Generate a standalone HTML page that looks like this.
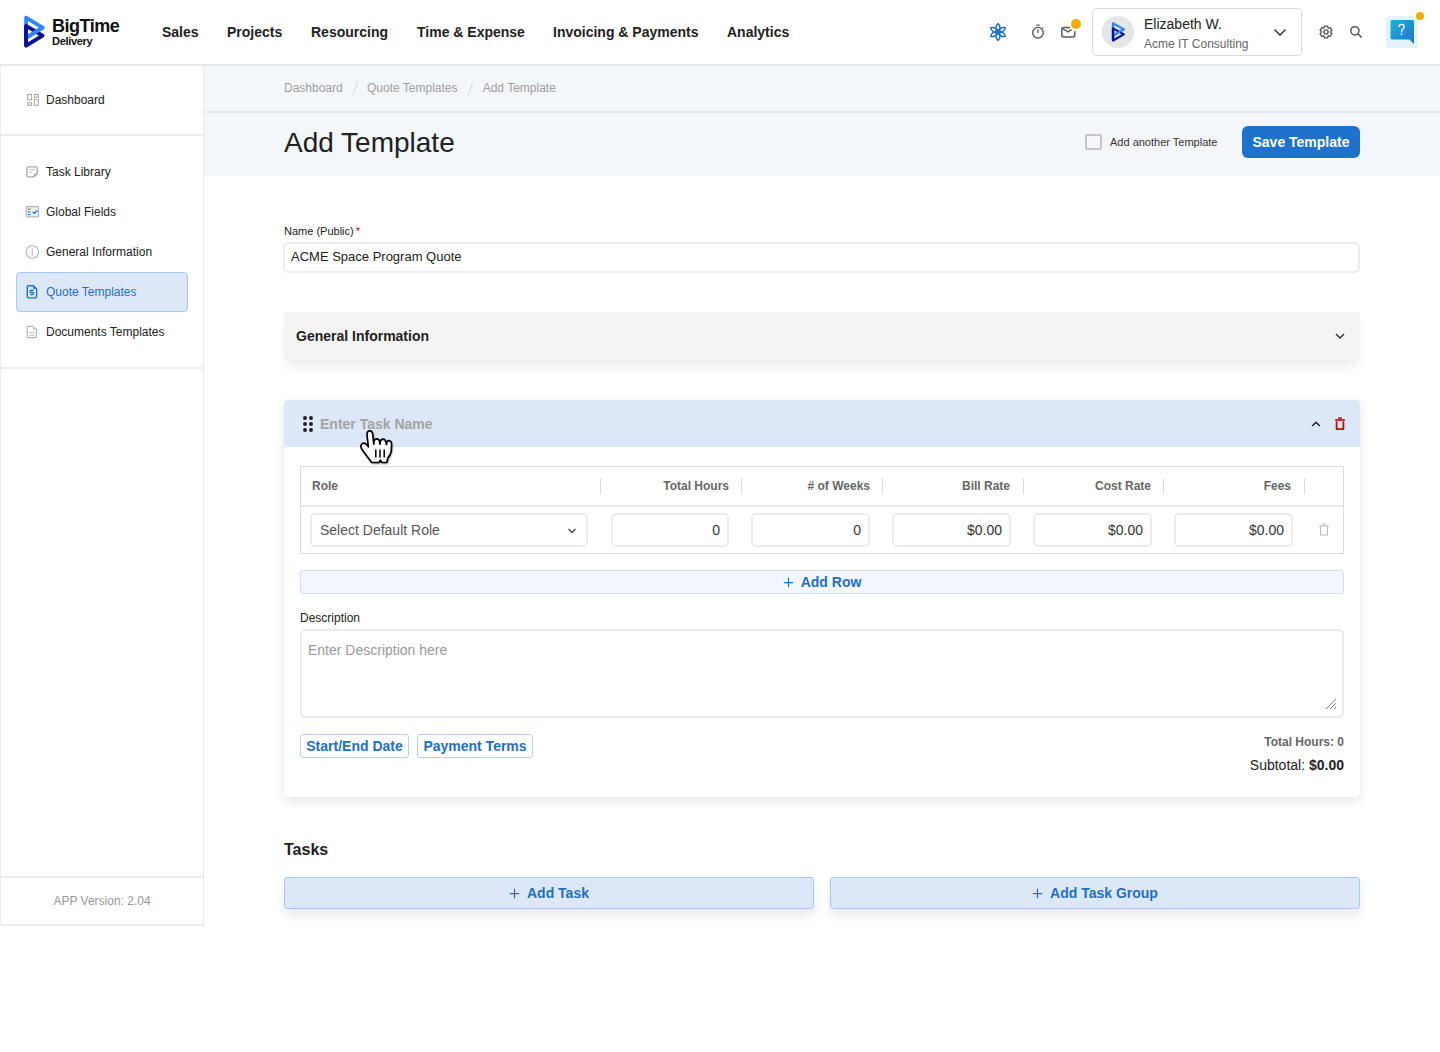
<!DOCTYPE html>
<html><head><meta charset="utf-8">
<style>
*{box-sizing:border-box;margin:0;padding:0}
html,body{width:1440px;height:1052px;overflow:hidden;background:#fff;font-family:"Liberation Sans",sans-serif;color:#222}
.abs{position:absolute;white-space:nowrap}
svg{position:absolute;overflow:visible}
#top{position:absolute;left:0;top:0;width:1440px;height:66px;background:#fff;border-bottom:2px solid #e6e8eb}
.nav{position:absolute;top:24px;font-size:14px;font-weight:bold;color:#222;white-space:nowrap;line-height:16px}
#side{position:absolute;left:0;top:64px;width:204px;height:862px;border-right:1.5px solid #e8e8e8;border-bottom:2px solid #ececec;border-left:1px solid #ececec;background:#fff}
.si{position:absolute;left:45px;font-size:12px;color:#222;line-height:14px;white-space:nowrap}
#crumb{position:absolute;left:204px;top:66px;width:1236px;height:47px;background:#f3f6fa;border-bottom:2px solid #e6e8eb}
#hdr{position:absolute;left:204px;top:113px;width:1236px;height:63px;background:#f3f6fa}
.card{position:absolute;background:#fff;border-radius:4px}
.th{position:absolute;top:12px;font-size:12px;font-weight:bold;color:#666;line-height:14px}
.sep{position:absolute;top:11px;width:1px;height:16px;background:#ddd}
.inp{position:absolute;top:6px;height:34px;border:2px solid #ececec;border-radius:5px;background:#fff;font-size:14px;color:#333;text-align:right;padding-right:7px;line-height:31px}
.btnl{position:absolute;background:#dce8f7;border:1px solid #a9c8ee;border-radius:3px;color:#1f6fc5;font-size:14px;font-weight:bold;text-align:center;box-shadow:0 6px 12px rgba(0,0,0,0.09)}
</style></head><body>

<div id="top">
  <svg style="left:0;top:0" width="60" height="60" viewBox="0 0 60 60">
    <polygon points="26.1,17.6 42.6,27.6 26.1,37.8" fill="none" stroke="#2f86ff" stroke-width="3.8" stroke-linejoin="round"/>
    <polygon points="26.1,25.9 42.6,35.7 26.1,45.7" fill="none" stroke="#0a129a" stroke-width="3.8" stroke-linejoin="round"/>
    <line x1="42.6" y1="27.6" x2="28" y2="36.65" stroke="#2f86ff" stroke-width="3.8" stroke-linecap="round"/>
    <line x1="26.1" y1="26" x2="26.1" y2="45.6" stroke="#0a129a" stroke-width="3.8"/>
  </svg>
  <div class="abs" style="left:52px;top:15px;font-size:18px;font-weight:bold;letter-spacing:-0.5px;color:#111;line-height:22px">BigTime</div>
  <div class="abs" style="left:52px;top:35px;font-size:11px;font-weight:bold;letter-spacing:-0.3px;color:#111;line-height:12px">Delivery</div>
  <div class="nav" style="left:162px">Sales</div>
  <div class="nav" style="left:227px">Projects</div>
  <div class="nav" style="left:311px">Resourcing</div>
  <div class="nav" style="left:417px">Time &amp; Expense</div>
  <div class="nav" style="left:553px">Invoicing &amp; Payments</div>
  <div class="nav" style="left:727px">Analytics</div>

  <!-- atom -->
  <svg style="left:988px;top:22px" width="20" height="20" viewBox="-10 -10 20 20">
    <g fill="none" stroke="#1f72cc" stroke-width="1.5" stroke-linejoin="round">
      <path d="M0,-1 C2.7,-3 2.5,-6.2 0,-8.4 C-2.5,-6.2 -2.7,-3 0,-1 Z" transform="rotate(0)"/>
      <path d="M0,-1 C2.7,-3 2.5,-6.2 0,-8.4 C-2.5,-6.2 -2.7,-3 0,-1 Z" transform="rotate(60)"/>
      <path d="M0,-1 C2.7,-3 2.5,-6.2 0,-8.4 C-2.5,-6.2 -2.7,-3 0,-1 Z" transform="rotate(120)"/>
      <path d="M0,-1 C2.7,-3 2.5,-6.2 0,-8.4 C-2.5,-6.2 -2.7,-3 0,-1 Z" transform="rotate(180)"/>
      <path d="M0,-1 C2.7,-3 2.5,-6.2 0,-8.4 C-2.5,-6.2 -2.7,-3 0,-1 Z" transform="rotate(240)"/>
      <path d="M0,-1 C2.7,-3 2.5,-6.2 0,-8.4 C-2.5,-6.2 -2.7,-3 0,-1 Z" transform="rotate(300)"/>
    </g>
    <circle cx="0" cy="0" r="3.1" fill="#1f72cc"/>
  </svg>
  <!-- stopwatch -->
  <svg style="left:1030px;top:22px" width="16" height="20" viewBox="0 0 16 20">
    <g fill="none" stroke="#5a5a5a" stroke-width="1.4">
      <circle cx="8" cy="10.7" r="5.3"/>
      <line x1="8" y1="7.3" x2="8" y2="11" stroke-width="1.3"/>
      <line x1="6.2" y1="3.1" x2="9.8" y2="3.1" stroke-width="1.2"/>
      <line x1="12.9" y1="5.4" x2="12.5" y2="6.6" stroke-width="1.1"/>
    </g>
  </svg>
  <!-- mail -->
  <svg style="left:1060px;top:24px" width="24" height="16" viewBox="0 0 24 16">
    <path d="M10,3.4 H3.8 Q1.8,3.4 1.8,5.4 V11 Q1.8,12.9 3.8,12.9 H12.8 Q14.75,12.9 14.75,11 V7.2" fill="none" stroke="#5a5a5a" stroke-width="1.5"/>
    <path d="M2.6,4.7 L8.1,8 L11.6,5.7" fill="none" stroke="#5a5a5a" stroke-width="1.4"/>
  </svg>
  <div class="abs" style="left:1071px;top:19px;width:10px;height:10px;border-radius:50%;background:#f2ac05"></div>

  <!-- user box -->
  <div class="abs" style="left:1092px;top:8px;width:210px;height:48px;border:1px solid #dcdcdc;border-radius:4px;background:#fff"></div>
  <div class="abs" style="left:1102px;top:16px;width:32px;height:32px;border-radius:50%;background:#e5e5e5"></div>
  <svg style="left:1110.5px;top:21px" width="15" height="20.9" viewBox="23 14 23 34" preserveAspectRatio="none">
    <polygon points="26.1,17.6 42.6,27.6 26.1,37.8" fill="none" stroke="#2f86ff" stroke-width="3.5" stroke-linejoin="round"/>
    <polygon points="26.1,25.9 42.6,35.7 26.1,45.7" fill="none" stroke="#0a129a" stroke-width="3.5" stroke-linejoin="round"/>
    <line x1="42.6" y1="27.6" x2="28" y2="36.65" stroke="#2f86ff" stroke-width="3.5" stroke-linecap="round"/>
    <line x1="26.1" y1="26" x2="26.1" y2="45.6" stroke="#0a129a" stroke-width="3.5"/>
  </svg>
  <div class="abs" style="left:1144px;top:16px;font-size:14px;color:#222;line-height:16px">Elizabeth W.</div>
  <div class="abs" style="left:1144px;top:37px;font-size:12px;color:#666;line-height:14px">Acme IT Consulting</div>
  <svg style="left:1270px;top:26px" width="20" height="12" viewBox="0 0 20 12">
    <path d="M4.5,3.5 L10,9 L15.5,3.5" fill="none" stroke="#444" stroke-width="1.7"/>
  </svg>

  <!-- gear -->
  <svg style="left:1318px;top:24px" width="16" height="16" viewBox="-8 -8 16 16">
    <g transform="scale(0.93)"><path fill="none" stroke="#555" stroke-width="1.4" stroke-linejoin="round" d="M-2.22,-4.37 L-1.60,-6.40 L1.60,-6.40 L2.22,-4.37 L2.67,-4.11 L4.75,-4.58 L6.34,-1.82 L4.89,-0.26 L4.89,0.26 L6.34,1.82 L4.75,4.58 L2.67,4.11 L2.22,4.37 L1.60,6.40 L-1.60,6.40 L-2.22,4.37 L-2.67,4.11 L-4.75,4.58 L-6.34,1.82 L-4.89,0.26 L-4.89,-0.26 L-6.34,-1.82 L-4.75,-4.58 L-2.67,-4.11 Z"/>
    <circle cx="0" cy="0" r="2.3" fill="none" stroke="#555" stroke-width="1.4"/></g>
  </svg>
  <!-- search -->
  <svg style="left:1348px;top:24px" width="16" height="16" viewBox="0 0 16 16">
    <circle cx="6.9" cy="6.8" r="4.1" fill="none" stroke="#555" stroke-width="1.5"/>
    <line x1="9.9" y1="9.8" x2="13.6" y2="13.5" stroke="#555" stroke-width="1.6"/>
  </svg>
  <!-- help -->
  <div class="abs" style="left:1386px;top:16px;width:32px;height:32px;border-radius:3px;background:#e2f3fc"></div>
  <svg style="left:1390px;top:20px" width="25" height="25" viewBox="0 0 25 25">
    <defs><linearGradient id="hg" x1="0" y1="0" x2="1" y2="1"><stop offset="0" stop-color="#1fb5d6"/><stop offset="1" stop-color="#1e73d0"/></linearGradient></defs>
    <path d="M2,0 H22.5 Q24,0 24,1.5 V24 L19.5,19.5 H2 Q0.5,19.5 0.5,18 V1.5 Q0.5,0 2,0 Z" fill="url(#hg)"/>
    <path d="M8.9,6.9 Q8.9,4.3 11.5,4.3 Q14.2,4.3 14.2,6.8 Q14.2,8.4 12.6,9.4 Q11.5,10.1 11.5,11.6 V12.6" fill="none" stroke="#fff" stroke-width="1.3"/><circle cx="11.5" cy="14.3" r="0.85" fill="#fff"/>
  </svg>
  <div class="abs" style="left:1416px;top:12px;width:8px;height:8px;border-radius:50%;background:#f2ac05"></div>
</div>

<div id="side">
  <div class="abs" style="left:-1px;top:0;width:204px;height:2px;background:#e6e8eb"></div>
  <svg style="left:20px;top:24px" width="24" height="24" viewBox="20 88 24 24">
    <g fill="none" stroke="#a8a8a8" stroke-width="1.05">
      <rect x="26.6" y="94.5" width="3.8" height="5.4"/><rect x="33.5" y="94.5" width="3.9" height="2.7"/>
      <rect x="26.6" y="102.7" width="3.8" height="2.6"/><rect x="33.5" y="99.7" width="3.9" height="5.6"/>
    </g>
  </svg>
  <div class="si" style="top:29px">Dashboard</div>
  <div class="abs" style="left:0;top:70px;width:202px;height:2px;background:#ececec"></div>

  <svg style="left:20px;top:96px" width="24" height="24" viewBox="20.9 160 24 24">
    <path d="M28.2,166.9 H35.8 Q37.2,166.9 37.2,168.3 V173.6 L33.8,176.9 H28.2 Q26.8,176.9 26.8,175.5 V168.3 Q26.8,166.9 28.2,166.9 Z" fill="none" stroke="#a8a8a8" stroke-width="1.3" stroke-linejoin="round"/>
    <path d="M37.2,173.6 L33.8,176.9 V174.6 Q33.8,173.6 34.8,173.6 Z" fill="#a8a8a8"/>
    <line x1="28.8" y1="169.6" x2="35.2" y2="169.6" stroke="#bdbdbd" stroke-width="1.1"/>
    <line x1="28.8" y1="172.3" x2="31.8" y2="172.3" stroke="#bdbdbd" stroke-width="1.1"/>
  </svg>
  <div class="si" style="top:101px">Task Library</div>

  <svg style="left:20px;top:136px" width="24" height="24" viewBox="20.7 200 24 24">
    <rect x="25.9" y="206.7" width="12.3" height="10.2" rx="0.8" fill="#f0f0f0" stroke="#b5b5b5" stroke-width="1.2"/>
    <g stroke="#1f72cc" stroke-width="1.05"><line x1="27.4" y1="209.1" x2="30.2" y2="209.1"/><line x1="27.4" y1="211.9" x2="30.2" y2="211.9"/><line x1="27.4" y1="214.6" x2="30.2" y2="214.6"/></g>
    <path d="M32.4,212 L34,213.4 L37.1,210.5" fill="none" stroke="#1f72cc" stroke-width="1.4"/>
  </svg>
  <div class="si" style="top:141px">Global Fields</div>

  <svg style="left:20px;top:176px" width="24" height="24" viewBox="20.7 240 24 24">
    <circle cx="32" cy="252" r="6.2" fill="none" stroke="#b0b0b0" stroke-width="1.1"/>
    <line x1="32" y1="250.8" x2="32" y2="255.4" stroke="#b0b0b0" stroke-width="1.2"/>
    <circle cx="32" cy="248.9" r="0.75" fill="#b0b0b0"/>
  </svg>
  <div class="si" style="top:181px">General Information</div>

  <div class="abs" style="left:15px;top:208px;width:172px;height:40px;background:#dce8f7;border:1px solid #a9c8ee;border-radius:4px"></div>
  <svg style="left:20px;top:216px" width="24" height="24" viewBox="21 280 24 24">
    <path d="M28.4,285.7 H33.4 L36.6,288.9 V296.6 Q36.6,297.9 35.3,297.9 H28.4 Q27.3,297.9 27.3,296.6 V287 Q27.3,285.7 28.4,285.7 Z" fill="none" stroke="#1f72cc" stroke-width="1.4" stroke-linejoin="round"/>
    <path d="M33.2,285.7 L36.6,289.1 H34.2 Q33.2,289.1 33.2,288.1 Z" fill="#1f72cc"/>
    <path d="M33.6,290.4 H31 Q30,290.4 30,291.4 Q30,292.3 31,292.3 H32.6 Q33.6,292.3 33.6,293.3 Q33.6,294.3 32.6,294.3 H30" fill="none" stroke="#1f72cc" stroke-width="1.3"/>
    <line x1="31.8" y1="289.2" x2="31.8" y2="290.4" stroke="#1f72cc" stroke-width="1.1"/>
    <line x1="31.8" y1="294.3" x2="31.8" y2="295.5" stroke="#1f72cc" stroke-width="1.1"/>
  </svg>
  <div class="si" style="top:221px;color:#1f6fc5">Quote Templates</div>

  <svg style="left:20px;top:256px" width="24" height="24" viewBox="21 320 24 24">
    <path d="M28.3,326.3 H33.1 L36.4,329.6 V336.6 Q36.4,337.7 35.3,337.7 H28.3 Q27.2,337.7 27.2,336.6 V327.4 Q27.2,326.3 28.3,326.3 Z" fill="none" stroke="#b5b5b5" stroke-width="1.2" stroke-linejoin="round"/>
    <path d="M33,326.3 L36.4,329.7 H34 Q33,329.7 33,328.7 Z" fill="#c8c8c8"/>
    <line x1="29.2" y1="332.4" x2="34.4" y2="332.4" stroke="#c0c0c0" stroke-width="1"/>
    <line x1="29.2" y1="335.2" x2="34.4" y2="335.2" stroke="#c0c0c0" stroke-width="1"/>
  </svg>
  <div class="si" style="top:261px">Documents Templates</div>
  <div class="abs" style="left:0;top:303px;width:202px;height:2px;background:#ececec"></div>
  <div class="abs" style="left:0;top:812px;width:202px;height:2px;background:#ececec"></div>
  <div class="abs" style="left:0;top:830px;width:202px;text-align:center;font-size:12px;color:#999;line-height:14px">APP Version: 2.04</div>
</div>

<div id="crumb">
  <div class="abs" style="left:80px;top:15px;font-size:12px;color:#a0a0a0;line-height:14px">Dashboard</div>
  <svg style="left:140px;top:10px" width="20" height="25" viewBox="344 76 20 25"><line x1="357.6" y1="81.6" x2="352.9" y2="95.3" stroke="#d2d2d2" stroke-width="0.9"/></svg>
  <div class="abs" style="left:163px;top:15px;font-size:12px;color:#a0a0a0;line-height:14px">Quote Templates</div>
  <svg style="left:255px;top:10px" width="20" height="25" viewBox="459 76 20 25"><line x1="472.9" y1="81.6" x2="468.2" y2="95.3" stroke="#d2d2d2" stroke-width="0.9"/></svg>
  <div class="abs" style="left:278.7px;top:15px;font-size:12px;color:#a0a0a0;line-height:14px">Add Template</div>
</div>
<div id="hdr">
  <div class="abs" style="left:80px;top:14px;font-size:28px;color:#222;line-height:32px">Add Template</div>
  <div class="abs" style="left:881px;top:21px;width:17px;height:16px;border:2px solid #c6c6c6;border-radius:2px;background:transparent"></div>
  <div class="abs" style="left:906px;top:23px;font-size:11px;color:#333;line-height:13px">Add another Template</div>
  <div class="abs" style="left:1038px;top:13px;width:118px;height:32px;background:#1f72cc;border-radius:6px;color:#fff;font-size:14px;font-weight:bold;text-align:center;line-height:32px">Save Template</div>
</div>

<!-- main content -->
<div class="abs" style="left:284px;top:225px;font-size:11px;color:#222;line-height:13px">Name (Public)<span style="color:#c80000;margin-left:2px">*</span></div>
<div class="abs" style="left:283px;top:242px;width:1077px;height:31px;border:2px solid #ececec;border-radius:5px;font-size:13px;color:#222;padding-left:6px;line-height:26px">ACME Space Program Quote</div>

<div class="card" style="left:284px;top:312px;width:1076px;height:48px;background:#f4f4f4;box-shadow:0 9px 12px -3px rgba(0,0,0,0.08)">
  <div class="abs" style="left:12px;top:16px;font-size:14px;font-weight:bold;color:#222;line-height:16px">General Information</div>
  <svg style="left:1050px;top:20px" width="12" height="8" viewBox="0 0 12 8"><path d="M2,2 L6,6 L10,2" fill="none" stroke="#333" stroke-width="1.5"/></svg>
</div>

<div class="card" style="left:284px;top:400px;width:1076px;height:397px;box-shadow:0 4px 12px rgba(0,0,0,0.10)">
  <div class="abs" style="left:0;top:0;width:1076px;height:47px;background:#dce8f7;border-radius:4px 4px 0 0"></div>
  <svg style="left:19px;top:16px" width="10" height="16" viewBox="0 0 10 16">
    <g fill="#1e1e1e"><circle cx="2" cy="2" r="1.95"/><circle cx="8" cy="2" r="1.95"/><circle cx="2" cy="8" r="1.95"/><circle cx="8" cy="8" r="1.95"/><circle cx="2" cy="14" r="1.95"/><circle cx="8" cy="14" r="1.95"/></g>
  </svg>
  <div class="abs" style="left:36px;top:16px;font-size:14px;font-weight:bold;color:#a3a3a3;line-height:16px">Enter Task Name</div>
  <svg style="left:1026px;top:20px" width="12" height="8" viewBox="0 0 12 8"><path d="M2.2,6 L6,2.2 L9.8,6" fill="none" stroke="#222" stroke-width="1.5"/></svg>
  <svg style="left:1050px;top:17px" width="12" height="14" viewBox="0 0 12 14">
    <path d="M2.6,4.2 V12.1 H9.4 V4.2" fill="none" stroke="#c40a0a" stroke-width="1.8"/>
    <line x1="1.2" y1="3" x2="10.8" y2="3" stroke="#c40a0a" stroke-width="1.7"/>
    <line x1="4" y1="1.1" x2="8" y2="1.1" stroke="#c40a0a" stroke-width="1.5"/>
  </svg>

  <!-- table -->
  <div class="abs" style="left:16px;top:66px;width:1044px;height:88px;border:1px solid #ddd">
    <div class="abs" style="left:0;top:38px;width:1042px;height:2px;background:#ebebeb"></div>
    <div class="th" style="left:11px">Role</div>
    <div class="sep" style="left:299px"></div>
    <div class="th" style="right:614px">Total Hours</div>
    <div class="sep" style="left:440px"></div>
    <div class="th" style="right:473px"># of Weeks</div>
    <div class="sep" style="left:581px"></div>
    <div class="th" style="right:333px">Bill Rate</div>
    <div class="sep" style="left:722px"></div>
    <div class="th" style="right:192px">Cost Rate</div>
    <div class="sep" style="left:862px"></div>
    <div class="th" style="right:52px">Fees</div>
    <div class="sep" style="left:1003px"></div>
    <div class="abs" style="left:0;top:40px;width:1042px;height:46px">
      <div class="inp" style="left:9px;width:278px;text-align:left;padding-left:8px;color:#555">Select Default Role
        <svg style="left:255px;top:12px" width="10" height="8" viewBox="0 0 10 8"><path d="M1.5,2 L5,5.5 L8.5,2" fill="none" stroke="#444" stroke-width="1.3"/></svg>
      </div>
      <div class="inp" style="left:310px;width:118px">0</div>
      <div class="inp" style="left:450px;width:119px">0</div>
      <div class="inp" style="left:591px;width:119px">$0.00</div>
      <div class="inp" style="left:732px;width:119px">$0.00</div>
      <div class="inp" style="left:873px;width:119px">$0.00</div>
      <svg style="left:1017px;top:16px" width="12" height="14" viewBox="0 0 12 14">
        <path d="M2.5,3.5 V12 H9.5 V3.5" fill="none" stroke="#bbb" stroke-width="1.1"/>
        <line x1="1" y1="3" x2="11" y2="3" stroke="#bbb" stroke-width="1.1"/>
        <line x1="4" y1="1.2" x2="8" y2="1.2" stroke="#bbb" stroke-width="1.1"/>
      </svg>
    </div>
  </div>

  <div class="abs" style="left:16px;top:170px;width:1044px;height:24px;background:#f3f7fd;border:1px solid #cfe0f3;border-radius:3px;text-align:center;color:#1f6fc5;font-size:14px;font-weight:bold;line-height:22px"><svg style="position:relative;display:inline-block;vertical-align:-1px;margin-right:7px" width="11" height="11" viewBox="0 0 11 11"><path d="M5.5,0.8 V10.2 M0.8,5.5 H10.2" stroke="#1f6fc5" stroke-width="1.25"/></svg>Add Row</div>

  <div class="abs" style="left:16px;top:211px;font-size:12px;color:#222;line-height:14px">Description</div>
  <div class="abs" style="left:16px;top:229px;width:1044px;height:89px;border:2px solid #ebebeb;border-radius:5px">
    <div class="abs" style="left:6px;top:11px;font-size:14px;color:#999;line-height:16px">Enter Description here</div>
    <svg style="left:1023px;top:67px" width="12" height="12" viewBox="0 0 12 12"><path d="M11,1 L1,11 M11,5 L5,11 M11,9 L9,11" stroke="#777" stroke-width="0.9"/></svg>
  </div>

  <div class="abs" style="left:16px;top:334px;width:109px;height:24px;border:1px solid #b7d1ef;border-radius:3px;color:#1f6fc5;font-size:14px;font-weight:bold;text-align:center;line-height:22px">Start/End Date</div>
  <div class="abs" style="left:133px;top:334px;width:116px;height:24px;border:1px solid #b7d1ef;border-radius:3px;color:#1f6fc5;font-size:14px;font-weight:bold;text-align:center;line-height:22px">Payment Terms</div>

  <div class="abs" style="right:16px;top:335px;font-size:12px;font-weight:bold;color:#666;line-height:14px">Total Hours: 0</div>
  <div class="abs" style="right:16px;top:357px;font-size:14px;color:#222;line-height:16px">Subtotal: <b>$0.00</b></div>
</div>

<div class="abs" style="left:284px;top:841px;font-size:16px;font-weight:bold;color:#222;line-height:18px">Tasks</div>
<div class="btnl" style="left:284px;top:877px;width:530px;height:32px;line-height:30px"><svg style="position:relative;display:inline-block;vertical-align:-1px;margin-right:7px" width="11" height="11" viewBox="0 0 11 11"><path d="M5.5,0.8 V10.2 M0.8,5.5 H10.2" stroke="#1f6fc5" stroke-width="1.25"/></svg>Add Task</div>
<div class="btnl" style="left:830px;top:877px;width:530px;height:32px;line-height:30px"><svg style="position:relative;display:inline-block;vertical-align:-1px;margin-right:7px" width="11" height="11" viewBox="0 0 11 11"><path d="M5.5,0.8 V10.2 M0.8,5.5 H10.2" stroke="#1f6fc5" stroke-width="1.25"/></svg>Add Task Group</div>

<!-- cursor -->
<svg style="left:355px;top:425px" width="45" height="45" viewBox="0 0 45 45">
  <defs><filter id="sh" x="-20%" y="-20%" width="140%" height="140%"><feGaussianBlur stdDeviation="0.8"/></filter></defs>
  <g transform="translate(-355,-425)">
  <path transform="translate(0.8,1.2)" filter="url(#sh)" opacity="0.55" d="M371.5,462.3 L361.6,449 Q359.8,445 362.6,443.4 Q365.3,442.3 368.4,446.8 L367,435 Q366.8,430.8 369.7,430.8 Q372.4,430.8 372.8,434.5 L373.8,444.2 L373.9,441.2 Q374.5,438.8 376.8,438.8 Q379.2,438.9 379.6,441.6 L380,444.2 L380.3,441.5 Q381,439.2 383.1,439.2 Q385.3,439.4 385.9,442 L386.5,444.5 L386.8,442.6 Q387.5,440.6 389,440.7 Q391.6,441.1 391.6,445 L391.2,451.5 Q390.6,454.5 387.8,458.3 L386.8,462.5 L381.8,462.5 L380.4,460.2 L379,462.5 Z" fill="#000"/>
  <path d="M371.5,462.3 L361.6,449 Q359.8,445 362.6,443.4 Q365.3,442.3 368.4,446.8 L367,435 Q366.8,430.8 369.7,430.8 Q372.4,430.8 372.8,434.5 L373.8,444.2 L373.9,441.2 Q374.5,438.8 376.8,438.8 Q379.2,438.9 379.6,441.6 L380,444.2 L380.3,441.5 Q381,439.2 383.1,439.2 Q385.3,439.4 385.9,442 L386.5,444.5 L386.8,442.6 Q387.5,440.6 389,440.7 Q391.6,441.1 391.6,445 L391.2,451.5 Q390.6,454.5 387.8,458.3 L386.8,462.5 L381.8,462.5 L380.4,460.2 L379,462.5 Z" fill="#fff" stroke="#000" stroke-width="1.7" stroke-linejoin="round"/>
  <g stroke="#000" stroke-width="1.5"><line x1="375.8" y1="449.5" x2="375.8" y2="457.6"/><line x1="380" y1="449.5" x2="380" y2="457.6"/><line x1="384.2" y1="449.5" x2="384.2" y2="457.6"/></g>
  </g>
</svg>

</body></html>
